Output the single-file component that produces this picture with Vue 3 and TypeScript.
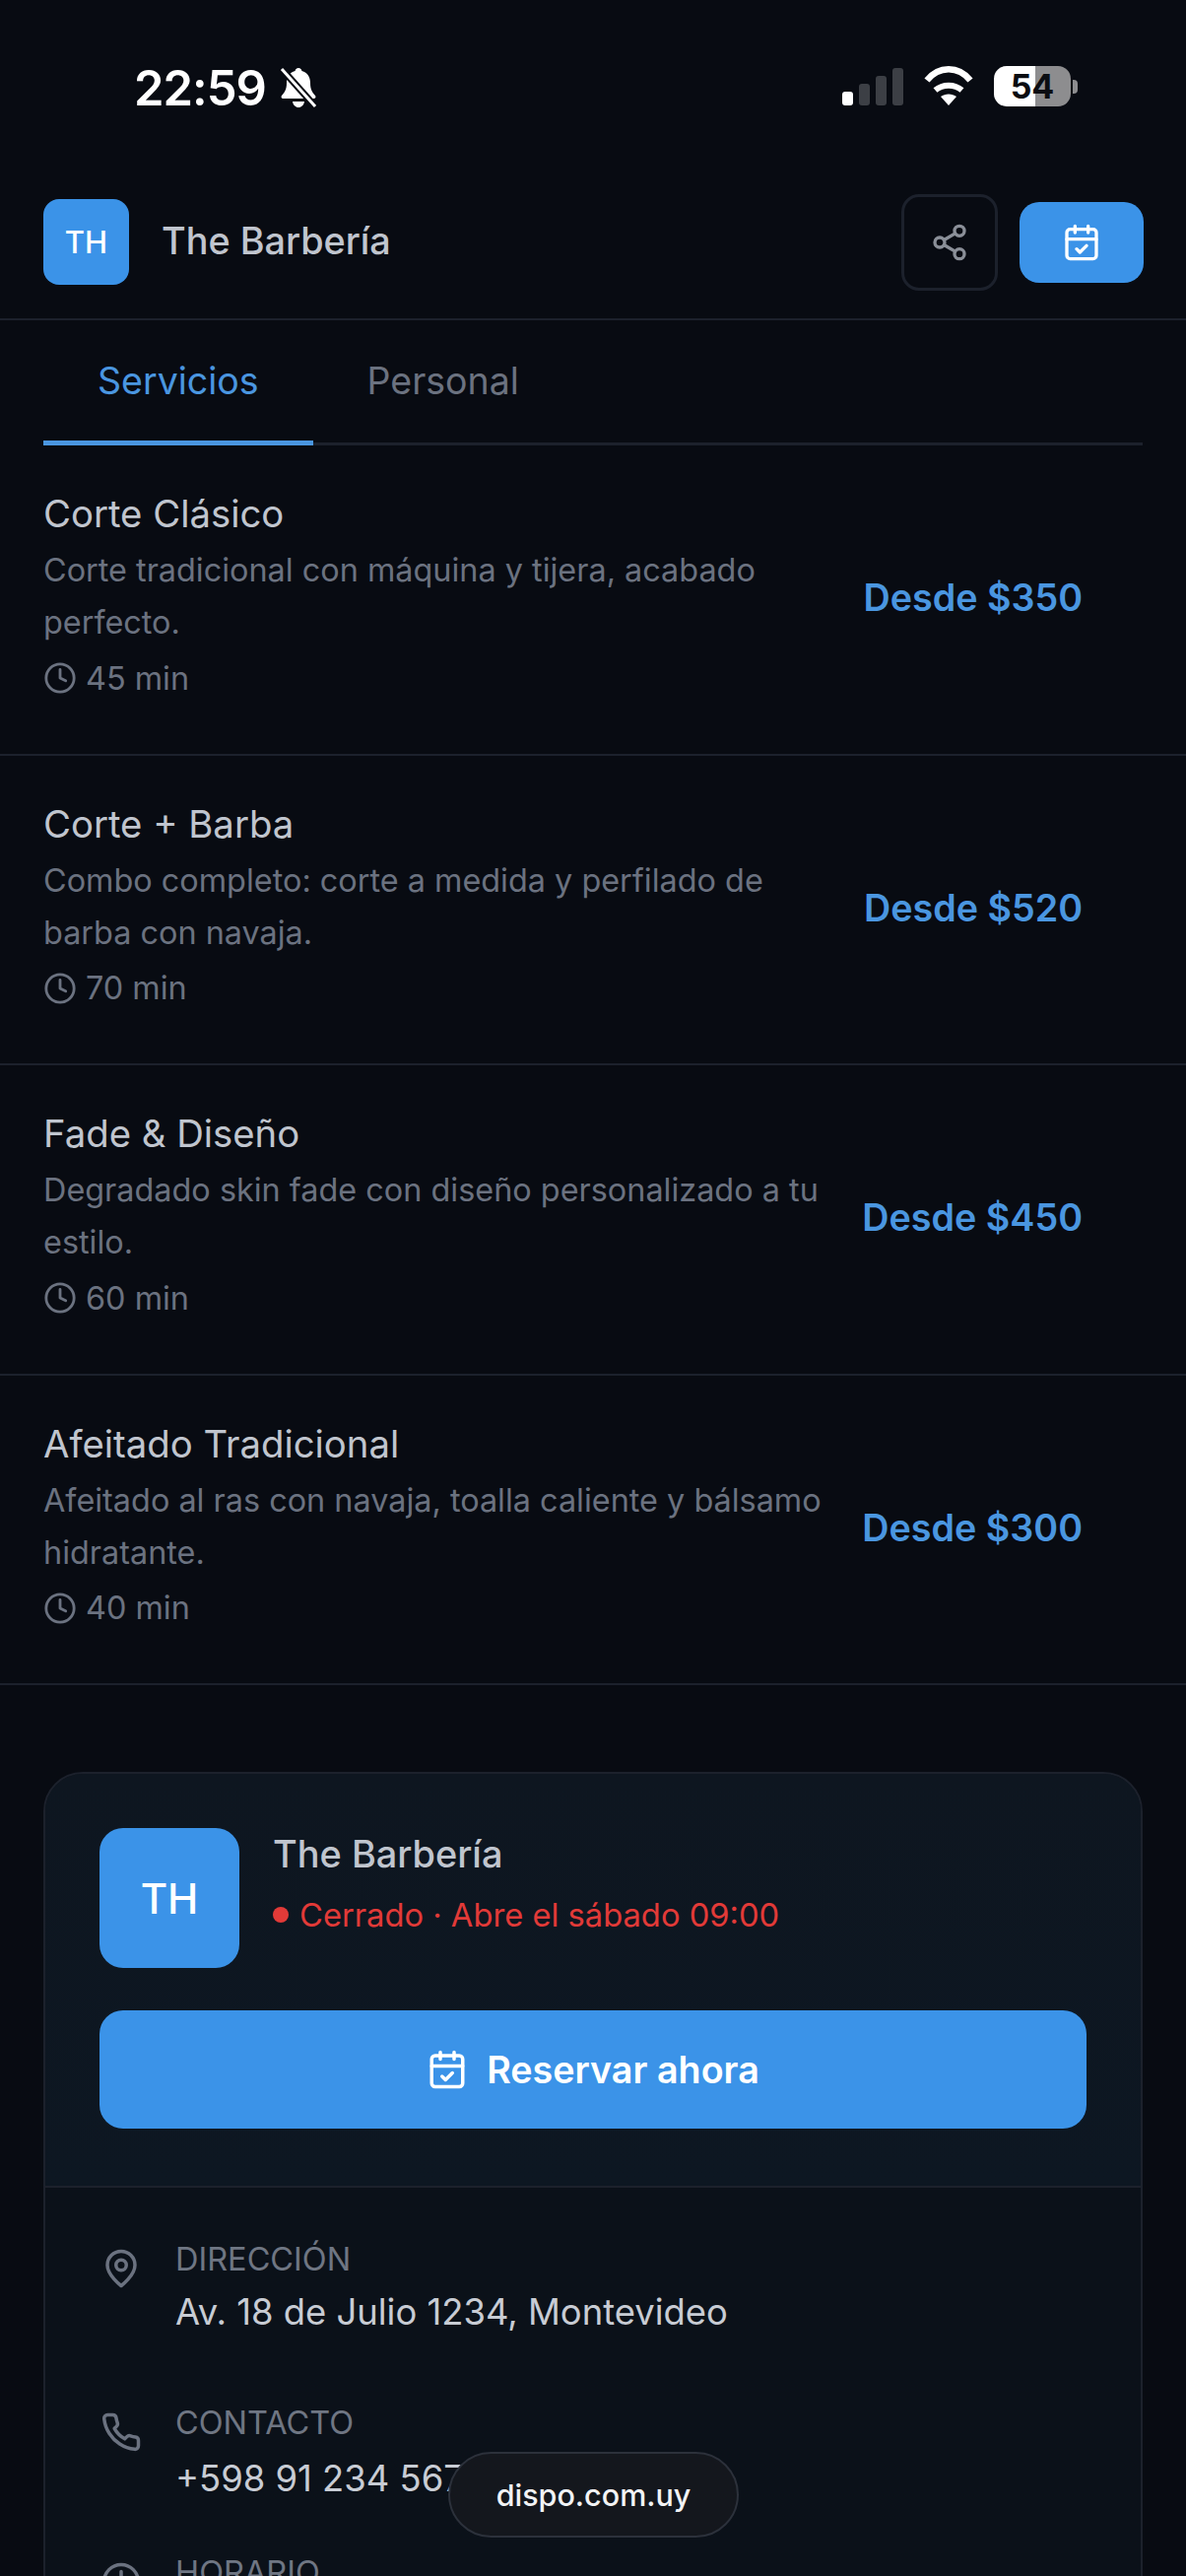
<template>
  <div class="page">
    <div class="status-bar">
      <div class="status-left">
        <span class="time">22:59</span>
        <svg class="bell" viewBox="0 0 38 42">
          <path d="M19 1c2 0 3.200 1.400 3.400 3 6 1.500 8.600 6.500 8.600 12 0 7 2 9.500 5 13 1 1.500 .4 3-1.500 3H3.500C1.600 32 1 30.500 2 29c3-3.500 5-6 5-13 0-5.500 2.600-10.500 8.600-12C15.800 2.400 17 1 19 1z" fill="#fff" />
          <path d="M13 35h12c-.5 3.500-3 6-6 6s-5.500-2.500-6-6z" fill="#fff" />
          <path d="M2 2l34 38" stroke="#080b12" stroke-width="7" />
          <path d="M2 2l34 38" stroke="#fff" stroke-width="3" />
        </svg>
      </div>
      <div class="status-right">
        <div class="signal">
          <span class="bar on" style="height: 14px"></span>
          <span class="bar" style="height: 22px"></span>
          <span class="bar" style="height: 30px"></span>
          <span class="bar" style="height: 38px"></span>
        </div>
        <svg class="wifi" viewBox="0 0 52 40">
          <path d="M26 40l-8-9c4.500-3.500 11.500-3.500 16 0z" fill="#fff" />
          <path d="M12.500 24.500c7.500-6.500 19.500-6.500 27 0" fill="none" stroke="#fff" stroke-width="6" />
          <path d="M4 14.500C16-.5 36-.5 48 14.500" fill="none" stroke="#fff" stroke-width="6.500" />
        </svg>
        <div class="battery">
          <div class="battery-body"><span>54</span></div>
          <span class="battery-nub"></span>
        </div>
      </div>
    </div>

    <header class="top-bar">
      <div class="avatar-small">TH</div>
      <div class="brand-name">The Barbería</div>
      <button class="share-btn">
        <svg class="icon-40" viewBox="0 0 24 24" fill="none" stroke="#8a8f98" stroke-width="2" stroke-linecap="round" stroke-linejoin="round">
          <circle cx="18" cy="5" r="3" />
          <circle cx="6" cy="12" r="3" />
          <circle cx="18" cy="19" r="3" />
          <path d="M8.590 13.510l6.830 3.980M15.410 6.510l-6.820 3.980" />
        </svg>
      </button>
      <button class="book-btn">
        <svg class="icon-40" viewBox="0 0 24 24" fill="none" stroke="#fff" stroke-width="2" stroke-linecap="round" stroke-linejoin="round">
          <path d="M8 2v4M16 2v4M3 10h18M9 16l2 2 4-4" />
          <rect x="3" y="4" width="18" height="18" rx="2" />
        </svg>
      </button>
    </header>

    <nav class="tabs">
      <div class="tab active">Servicios</div>
      <div class="tab">Personal</div>
    </nav>

    <div class="service" v-for="s in services" :key="s.name">
      <div class="service-info">
        <div class="service-name">{{ s.name }}</div>
        <div class="service-desc">{{ s.desc }}</div>
        <div class="service-meta">
          <svg class="clock" viewBox="0 0 24 24" fill="none" stroke="#6b7280" stroke-width="2" stroke-linecap="round" stroke-linejoin="round">
            <circle cx="12" cy="12" r="10" />
            <path d="M12 6v6l4 2" />
          </svg>
          <span>{{ s.time }}</span>
        </div>
      </div>
      <div class="service-price">Desde ${{ s.price }}</div>
    </div>

    <section class="card">
      <div class="card-head">
        <div class="card-brand">
          <div class="avatar-big">TH</div>
          <div>
            <div class="card-name">The Barbería</div>
            <div class="card-status"><span class="dot"></span>Cerrado · Abre el sábado 09:00</div>
          </div>
        </div>
        <button class="reserve-btn">
          <svg class="icon-40" viewBox="0 0 24 24" fill="none" stroke="#fff" stroke-width="2" stroke-linecap="round" stroke-linejoin="round">
            <path d="M8 2v4M16 2v4M3 10h18M9 16l2 2 4-4" />
            <rect x="3" y="4" width="18" height="18" rx="2" />
          </svg>
          Reservar ahora
        </button>
      </div>
      <div class="card-body">
        <div class="info-row address">
          <svg class="info-icon" viewBox="0 0 24 24" fill="none" stroke="#6b7280" stroke-width="2" stroke-linecap="round" stroke-linejoin="round">
            <path d="M20 10c0 6-8 12-8 12s-8-6-8-12a8 8 0 0 1 16 0Z" />
            <circle cx="12" cy="10" r="3" />
          </svg>
          <div>
            <div class="info-label">DIRECCIÓN</div>
            <div class="info-value">Av. 18 de Julio 1234, Montevideo</div>
          </div>
        </div>
        <div class="info-row contact">
          <svg class="info-icon" viewBox="0 0 24 24" fill="none" stroke="#6b7280" stroke-width="2" stroke-linecap="round" stroke-linejoin="round">
            <path d="M22 16.920v3a2 2 0 0 1-2.180 2 19.790 19.790 0 0 1-8.630-3.070 19.500 19.500 0 0 1-6-6 19.790 19.790 0 0 1-3.070-8.670A2 2 0 0 1 4.110 2h3a2 2 0 0 1 2 1.720 12.840 12.840 0 0 0 .7 2.810 2 2 0 0 1-.45 2.110L8.090 9.910a16 16 0 0 0 6 6l1.270-1.270a2 2 0 0 1 2.110-.45 12.840 12.840 0 0 0 2.810.7A2 2 0 0 1 22 16.920z" />
          </svg>
          <div>
            <div class="info-label">CONTACTO</div>
            <div class="info-value">+598 91 234 567</div>
          </div>
        </div>
        <div class="info-row">
          <svg class="info-icon" viewBox="0 0 24 24" fill="none" stroke="#6b7280" stroke-width="2" stroke-linecap="round" stroke-linejoin="round">
            <circle cx="12" cy="12" r="10" />
            <path d="M12 6v6l4 2" />
          </svg>
          <div>
            <div class="info-label">HORARIO</div>
          </div>
        </div>
      </div>
    </section>

    <div class="url-pill">dispo.com.uy</div>
  </div>
</template>

<script setup lang="ts">
interface Service {
  name: string
  desc: string
  time: string
  price: number
}

const services: Service[] = [
  { name: 'Corte Clásico', desc: 'Corte tradicional con máquina y tijera, acabado perfecto.', time: '45 min', price: 350 },
  { name: 'Corte + Barba', desc: 'Combo completo: corte a medida y perfilado de barba con navaja.', time: '70 min', price: 520 },
  { name: 'Fade & Diseño', desc: 'Degradado skin fade con diseño personalizado a tu estilo.', time: '60 min', price: 450 },
  { name: 'Afeitado Tradicional', desc: 'Afeitado al ras con navaja, toalla caliente y bálsamo hidratante.', time: '40 min', price: 300 }
]
</script>

<style>
html,
body {
  margin: 0;
  background: #080b12;
}
</style>

<style scoped>
.page {
  position: relative;
  width: 1204px;
  height: 2614px;
  overflow: hidden;
  background: #080b12;
  color: #c0c5ce;
  font-family: Inter, "Liberation Sans", sans-serif;
}

.status-bar {
  height: 170px;
  display: flex;
  justify-content: space-between;
  padding: 64px 110px 0 136px;
  box-sizing: border-box;
}

.status-left {
  display: flex;
  align-items: flex-start;
  gap: 14px;
}

.time {
  font-size: 49px;
  line-height: 52px;
  font-weight: 600;
  color: #fff;
  letter-spacing: -1px;
}

.bell {
  width: 38px;
  height: 42px;
  margin-top: 4px;
}

.status-right {
  display: flex;
  align-items: flex-start;
  gap: 20px;
}

.signal {
  display: flex;
  align-items: flex-end;
  gap: 6px;
  height: 38px;
  margin-top: 5px;
}

.bar {
  width: 11px;
  border-radius: 3px;
  background: #3c3f45;
}

.bar.on {
  background: #fff;
}

.wifi {
  width: 52px;
  height: 40px;
  margin-top: 3px;
}

.battery {
  display: flex;
  align-items: center;
  gap: 2px;
  margin-top: 3px;
}

.battery-body {
  width: 78px;
  height: 41px;
  border-radius: 13px;
  background: linear-gradient(90deg, #fff 0 54%, #8d8d8f 54% 100%);
  color: #0b0d12;
  font-size: 34px;
  font-weight: 700;
  line-height: 41px;
  text-align: center;
}

.battery-nub {
  width: 5px;
  height: 14px;
  border-radius: 0 4px 4px 0;
  background: #8d8d8f;
}

.top-bar {
  height: 155px;
  box-sizing: border-box;
  display: flex;
  align-items: center;
  padding: 0 43px 2px 44px;
  border-bottom: 2px solid #1c212c;
}

.avatar-small {
  width: 87px;
  height: 87px;
  border-radius: 16px;
  background: #3b93e8;
  color: #fff;
  font-size: 31px;
  font-weight: 500;
  display: flex;
  align-items: center;
  justify-content: center;
}

.brand-name {
  flex: 1;
  margin: 0 0 3px 33px;
  font-size: 37.800px;
  font-weight: 500;
}

.share-btn {
  width: 98px;
  height: 98px;
  border: 3px solid #1c212c;
  border-radius: 18px;
  background: transparent;
  display: flex;
  align-items: center;
  justify-content: center;
  padding: 0;
}

.book-btn {
  width: 126px;
  height: 82px;
  margin-left: 22px;
  border: none;
  border-radius: 20px;
  background: #3b93e8;
  display: flex;
  align-items: center;
  justify-content: center;
  padding: 0;
}

.icon-40 {
  width: 40px;
  height: 40px;
  flex-shrink: 0;
}

.tabs {
  display: flex;
  margin: 0 44px;
  border-bottom: 3px solid #1c212c;
}

.tab {
  height: 127px;
  box-sizing: border-box;
  padding: 0 55px;
  display: flex;
  align-items: center;
  font-size: 37.500px;
  color: #6b7280;
  margin-bottom: -3px;
  border-bottom: 5px solid transparent;
}

.tab.active {
  color: #4a96e0;
  border-bottom-color: #4a96e0;
}

.service {
  display: flex;
  align-items: center;
  gap: 30px;
  padding: 46px 105px 50.500px 44px;
  border-bottom: 2px solid #1c212c;
}

.service-info {
  flex: 1;
}

.service-name {
  font-size: 38.300px;
  line-height: 46px;
  font-weight: 400;
  margin-bottom: 8px;
}

.service-desc {
  font-size: 32.400px;
  line-height: 53px;
  color: #6b7280;
}

.service-meta {
  display: flex;
  align-items: center;
  gap: 9px;
  margin-top: 4px;
  height: 52px;
  font-size: 32.400px;
  color: #6b7280;
}

.clock {
  width: 34px;
  height: 34px;
}

.service-price {
  font-size: 37.700px;
  font-weight: 600;
  color: #4a96e0;
  white-space: nowrap;
}

.card {
  margin: 88px 44px 0;
  border: 2px solid #1c212c;
  border-radius: 40px;
  background: #0b1119;
  overflow: hidden;
}

.card-head {
  padding: 55px 55px 58px;
  background: linear-gradient(180deg, #0e1620, #0d1722);
  border-bottom: 2px solid #1c212c;
}

.card-brand {
  display: flex;
  gap: 34px;
}

.avatar-big {
  width: 142px;
  height: 142px;
  flex-shrink: 0;
  border-radius: 24px;
  background: #3b93e8;
  color: #fff;
  font-size: 42px;
  font-weight: 500;
  display: flex;
  align-items: center;
  justify-content: center;
}

.card-name {
  font-size: 37.900px;
  font-weight: 500;
  line-height: 48px;
  margin-top: 2px;
}

.card-status {
  display: flex;
  align-items: center;
  margin-top: 14px;
  font-size: 32.700px;
  line-height: 48px;
  color: #e23a38;
}

.dot {
  width: 16px;
  height: 16px;
  border-radius: 50%;
  background: #e23a38;
  margin-right: 11px;
}

.reserve-btn {
  width: 100%;
  height: 120px;
  margin-top: 43px;
  border: none;
  border-radius: 24px;
  background: #3b93e8;
  color: #fff;
  font-family: inherit;
  font-size: 37.700px;
  font-weight: 600;
  display: flex;
  align-items: center;
  justify-content: center;
  gap: 19px;
}

.reserve-btn .icon-40 {
  width: 42px;
  height: 42px;
}

.card-body {
  padding: 53px 56px;
}

.info-row {
  display: flex;
  gap: 34px;
  margin-bottom: 51px;
}

.info-row.address {
  margin-bottom: 68px;
}

.info-icon {
  width: 42px;
  height: 42px;
  flex-shrink: 0;
  margin-top: 8px;
}

.info-label {
  font-size: 32.500px;
  line-height: 40px;
  color: #6f7683;
}

.info-value {
  font-size: 36.400px;
  line-height: 50px;
  margin-top: 8px;
  color: #c8ccd4;
}

.contact .info-value {
  margin-top: 11px;
}

.url-pill {
  position: absolute;
  left: 455px;
  top: 2488px;
  width: 295px;
  height: 87px;
  box-sizing: border-box;
  display: flex;
  align-items: center;
  justify-content: center;
  border: 2px solid #2c313b;
  border-radius: 44px;
  background: #14171d;
  color: #f2f3f5;
  font-size: 30.500px;
  font-weight: 500;
}
</style>
